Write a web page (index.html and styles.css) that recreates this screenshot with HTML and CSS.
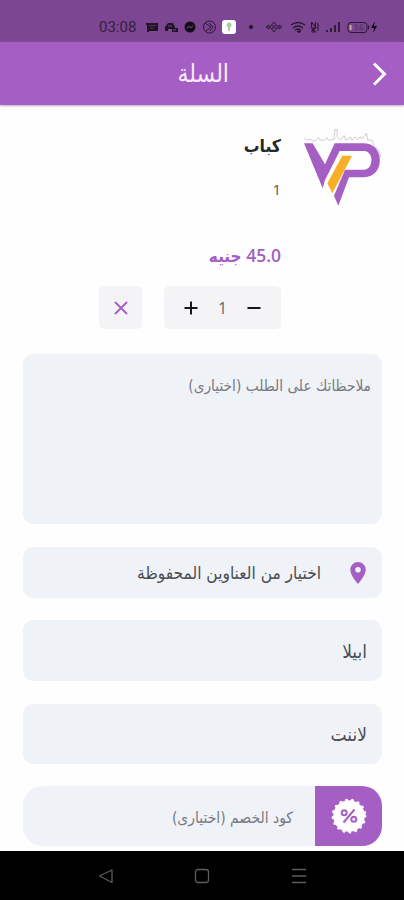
FILE: index.html
```html
<!DOCTYPE html>
<html lang="ar" dir="rtl">
<head>
<meta charset="utf-8">
<meta name="viewport" content="width=device-width">
<title>السلة</title>
<link rel="stylesheet" href="styles.css">
</head>
<body>
<div class="status" dir="ltr">
  <span class="clock">03:08</span>
  <svg class="status-icons" width="240" height="18" viewBox="0 0 240 18" fill="none" stroke="#2a1832">
    <path d="M2 5h12v8H5v1H3V7H2z" fill="#201526" stroke="none"/><path d="M5 7.500h7M6 10h4" stroke="#5b3869" stroke-width=".8"/>
    <path d="M21 13v-4l3-4h5l2 4v1h3v4h-6v-3h-4v2z" fill="#201526" stroke="none"/><path d="M24 8h4M29 12h3" stroke="#7c4693"/>
    <circle cx="46" cy="9" r="5.500" fill="#140c19" stroke="none"/><path d="M43 10.500l2-2.500 2 2 2-2.500" stroke="#7c4693"/>
    <circle cx="65.500" cy="9" r="6"/><path d="M61 5l6 4-5 4M65 5l4 4-3 4"/>
    <rect x="78" y="2" width="14" height="14" rx="3" fill="#fff" stroke="none"/><path d="M85 13V8" stroke="#8fbc83" stroke-width="1.500"/><circle cx="85" cy="7" r="2.500" fill="#a5d397" stroke="none"/>
    <circle cx="107" cy="9" r="2" fill="#201526" stroke="none"/>
    <path d="M122 9l3-2v4zM138 9l-3-2v4zM130 4l-4 5 4 5 4-5zM129 7v4M131 7v4"/>
    <path d="M147 7q7-5 14 0M149 10q5-4 10 0M151 12q3-2 6 0" stroke-width="1.500"/><path d="M153 13l2 2 2-2z" fill="#201526"/>
    <path d="M167.500 4v5M167.500 4l4 5V4M167.500 13l4-3h-4l4 4h-4M174 5v8" stroke-width="1.100"/>
    <path d="M183 14v-2M187 14v-4M191 14V7M195 14V4" stroke-width="1.800"/>
    <rect x="204" y="4.500" width="19" height="10" rx="3"/><path d="M206.500 7v5" stroke="#d4a891" stroke-width="2"/><path d="M210 7h3v5h-3M213 9.500h-2M219 7h-3v5h3v-2h-3" stroke="#53305f" stroke-width=".8"/><path d="M224.500 7.500v4"/>
    <path d="M231 3l-4 7h3l-1 5 4-7h-3z" fill="#100915" stroke="none"/>
  </svg>
</div>
<header class="header">
  <svg class="back" width="20" height="28" viewBox="0 0 20 28" fill="none" stroke="#fff" stroke-width="3"><path d="M4 3.500l10.500 10.500L4 24.500"/></svg>
  <h1 class="title">السلة</h1>
</header>
<main class="cart">
  <section class="item">
    <svg class="logo" width="95" height="90" viewBox="0 0 285 270">
      <path d="M28 54l7 7 12-4 6 7 10-3 7-9 5 8 12 1 9-8 4 7 17-1 3-31 7 1-1 20 9 10 13-12 4 13 16-8 3 9 10-11 7 9 8-10 5 8 13-17 4 20 13 1 7 18 13 10 6 22" fill="none" stroke="#bbb3bf" stroke-width="2"/>
      <path d="M27 70H53L90 133 119 70H207C271 70 271 172 207 172H162L130 257 117 227 150 149H207C237 149 237 93 207 93H134L90 180 83 205Z" fill="#a45ec4"/>
      <path d="M142 107H171L112 220 97 190Z" fill="#f9ae25"/>
    </svg>
    <div class="details">
      <h2 class="name"><span>كباب</span></h2>
      <p class="count">1</p>
      <p class="price">45.0 <span>جنيه</span></p>
      <div class="actions">
        <div class="stepper">
          <svg width="14" height="14" viewBox="0 0 14 14" stroke="#171717" stroke-width="2"><path d="M.5 7h13"/></svg>
          <span class="qty">1</span>
          <svg width="14" height="14" viewBox="0 0 14 14" stroke="#171717" stroke-width="2"><path d="M.5 7h13M7 .5v13"/></svg>
        </div>
        <div class="remove"><svg width="14" height="14" viewBox="0 0 14 14" stroke="#a45ec4" stroke-width="1.800"><path d="M1 1l12 12M13 1L1 13"/></svg></div>
      </div>
    </div>
  </section>
  <div class="box notes"><span class="t-notes">ملاحظاتك على الطلب (اختيارى)</span></div>
  <div class="box saved">
    <svg width="16" height="24" viewBox="0 0 16 24"><path fill="#a45ec4" fill-rule="evenodd" d="M8 1a7.700 7.700 0 0 0-7.700 7.800C.3 14.500 8 23 8 23s7.700-8.500 7.700-14.200A7.700 7.700 0 0 0 8 1zm0 5a2.800 2.800 0 1 1 0 5.600A2.800 2.800 0 0 1 8 6z"/></svg>
    <span class="t-saved">اختيار من العناوين المحفوظة</span>
  </div>
  <div class="box field first"><span>ابيلا</span></div>
  <div class="box field second"><span>لاننت</span></div>
  <div class="box coupon">
    <div class="badge"><svg width="36" height="36" viewBox="-18 -18 36 36">
      <circle r="15.800" fill="#fff"/><circle r="16" fill="none" stroke="#fff" stroke-width="3" stroke-linecap="round" stroke-dasharray="0.100 5.926"/>
      <g fill="none" stroke="#a45ec4" stroke-width="2"><path d="M5.500-6.500L-5.500 6.500"/><circle cx="-4.800" cy="-3.200" r="2.500"/><circle cx="4.800" cy="3.200" r="2.500"/></g>
    </svg></div>
    <span class="t-coupon">كود الخصم (اختيارى)</span>
  </div>
</main>
<nav class="nav">
  <svg width="16" height="16" viewBox="0 0 16 16" stroke="#5c5c5c" stroke-width="1.300"><path d="M1 1.500h14M1 8h14M1 14.500h14"/></svg>
  <svg width="16" height="16" viewBox="0 0 16 16" fill="none" stroke="#5c5c5c" stroke-width="1.300"><rect x="1.500" y="1.500" width="13" height="13" rx="2.500"/></svg>
  <svg width="16" height="16" viewBox="0 0 16 16" fill="none" stroke="#5c5c5c" stroke-width="1.300"><path d="M15 2v12.500L2.500 8z" stroke-linejoin="round"/></svg>
</nav>
</body>
</html>
```
FILE: styles.css
```css
* { box-sizing: border-box; margin: 0; padding: 0; }
body { width: 404px; height: 900px; overflow: hidden; display: flex; flex-direction: column; background: #fefefe; font-family: "DejaVu Sans Condensed", "DejaVu Sans", sans-serif; }
svg { display: block; flex: none; }
span { white-space: nowrap; }
.status { height: 42px; flex: none; background: #7c4693; display: flex; align-items: flex-end; padding: 0 0 6px 99px; }
.clock { width: 45px; font: 15px/17px Roboto, sans-serif; color: #35203f; }
.header { height: 63px; flex: none; background: #a45ec4; display: flex; align-items: center; padding-right: 14px; box-shadow: 0 1px 2px #b9aabd; }
.title { margin-right: 141px; font-size: 24.5px; font-weight: 400; line-height: 30px; color: #f7eafc; }
.cart { flex: 1; padding: 15px 22px 0 23px; }
.item { height: 234px; display: flex; margin-right: -8px; }
.logo { margin-left: 14px; }
.details { flex: 1; }
.name { height: 52px; padding-top: 12px; font-size: 17.5px; font-weight: 700; line-height: 28px; color: #292929; }
.count { height: 64px; font: 15px/34px "Open Sans", sans-serif; color: #555; }
.price { height: 50px; font: 600 17.5px/38px "Open Sans", "DejaVu Sans Condensed", sans-serif; color: #a45ec4; }
.price span { font-family: "DejaVu Sans Condensed", sans-serif; font-size: 17px; }
.actions { display: flex; gap: 22px; }
.stepper { width: 117px; height: 43px; border-radius: 5px; background: #f4f4f7; display: flex; align-items: center; justify-content: space-between; padding: 0 20px; }
.qty { font: 16px/20px "Open Sans", sans-serif; color: #666; }
.remove { width: 43px; height: 43px; border-radius: 5px; background: #f4f4f7; display: grid; place-items: center; }
.box { background: #eff3f8; border-radius: 10px; display: flex; align-items: center; }
.notes { height: 170px; align-items: flex-start; padding: 20px 11px; color: #777980; font-size: 15.3px; line-height: 24px; }
.saved { height: 51px; margin-top: 23px; padding-right: 16px; gap: 29px; color: #4b4c51; font-size: 17.2px; }
.field { height: 61px; margin-top: 22px; padding-right: 15px; color: #4b4c51; font-size: 19px; }
.second { margin-top: 23px; height: 60px; }
.coupon { height: 60px; margin-top: 22px; border-radius: 20px; overflow: hidden; color: #777980; font-size: 15.5px; }
.t-coupon { padding-top: 4px; }
.badge { width: 67px; height: 60px; background: #a45ec4; display: grid; place-items: center; margin-left: 22px; }
.nav { height: 49px; flex: none; background: #000; display: flex; align-items: center; justify-content: center; gap: 81px; }
```
